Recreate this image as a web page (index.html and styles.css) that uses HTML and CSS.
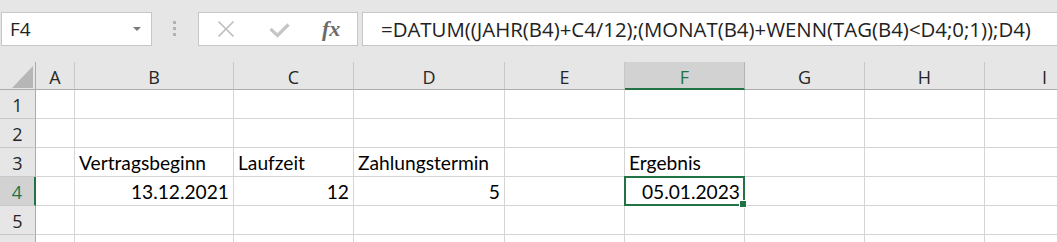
FILE: index.html
```html
<!DOCTYPE html>
<html>
  <head>
    <title>Mappe1 - Excel</title>
    <meta charset="UTF-8">
    <link rel="stylesheet" href="styles.css">
  </head>
  <body>
    <div class="formula-bar">
      <div class="name-box">
        <span class="ref">F4</span>
        <span class="caret"></span>
      </div>
      <div class="grip"><i></i><i></i><i></i></div>
      <div class="fx-box">
        <svg class="icon-cancel" width="18" height="18" viewBox="0 0 18 18">
          <path d="M1.5 1.5 L16.5 16.5 M16.5 1.5 L1.5 16.5" stroke="#bdbdbd" stroke-width="1.6" fill="none"/>
        </svg>
        <svg class="icon-enter" width="21" height="15" viewBox="0 0 21 15">
          <path d="M1.5 6 L8.5 12.5 L19.5 1.5" stroke="#c6c6c6" stroke-width="3.2" fill="none"/>
        </svg>
        <span class="fx">fx</span>
      </div>
      <div class="formula">=DATUM((JAHR(B4)+C4/12);(MONAT(B4)+WENN(TAG(B4)&lt;D4;0;1));D4)</div>
    </div>

    <div class="sheet">
      <!-- column headers -->
      <div class="corner"><span class="select-all"></span></div>
      <div class="col-head">A</div>
      <div class="col-head">B</div>
      <div class="col-head">C</div>
      <div class="col-head">D</div>
      <div class="col-head">E</div>
      <div class="col-head active">F</div>
      <div class="col-head">G</div>
      <div class="col-head">H</div>
      <div class="col-head">I</div>

      <!-- row 1 -->
      <div class="row-head">1</div>
      <div class="cell"></div><div class="cell"></div><div class="cell"></div><div class="cell"></div>
      <div class="cell"></div><div class="cell"></div><div class="cell"></div><div class="cell"></div><div class="cell"></div>

      <!-- row 2 -->
      <div class="row-head">2</div>
      <div class="cell"></div><div class="cell"></div><div class="cell"></div><div class="cell"></div>
      <div class="cell"></div><div class="cell"></div><div class="cell"></div><div class="cell"></div><div class="cell"></div>

      <!-- row 3 -->
      <div class="row-head">3</div>
      <div class="cell"></div>
      <div class="cell">Vertragsbeginn</div>
      <div class="cell">Laufzeit</div>
      <div class="cell">Zahlungstermin</div>
      <div class="cell"></div>
      <div class="cell">Ergebnis</div>
      <div class="cell"></div><div class="cell"></div><div class="cell"></div>

      <!-- row 4 -->
      <div class="row-head active">4</div>
      <div class="cell"></div>
      <div class="cell num">13.12.2021</div>
      <div class="cell num">12</div>
      <div class="cell num">5</div>
      <div class="cell"></div>
      <div class="cell num selected">05.01.2023</div>
      <div class="cell"></div><div class="cell"></div><div class="cell"></div>

      <!-- row 5 -->
      <div class="row-head">5</div>
      <div class="cell"></div><div class="cell"></div><div class="cell"></div><div class="cell"></div>
      <div class="cell"></div><div class="cell"></div><div class="cell"></div><div class="cell"></div><div class="cell"></div>

      <!-- row 6, only its top edge is in view -->
      <div class="row-head"></div>
      <div class="cell"></div><div class="cell"></div><div class="cell"></div><div class="cell"></div>
      <div class="cell"></div><div class="cell"></div><div class="cell"></div><div class="cell"></div><div class="cell"></div>
    </div>
  </body>
</html>
```

FILE: styles.css
```css
html, body {
  margin: 0;
  padding: 0;
  height: 242px;
  overflow: hidden;
  background-color: #e6e6e6;
  font-family: "Open Sans", "Noto Sans", sans-serif;
}

/* formula bar */

.formula-bar {
  display: flex;
  align-items: flex-start;
  height: 62px;
  padding: 12px 0 0 1px;
  box-sizing: border-box;
}

.name-box {
  display: flex;
  align-items: center;
  width: 151px;
  height: 34px;
  box-sizing: border-box;
  padding-left: 8px;
  border: 1px solid #c6c6c6;
  background-color: #fff;
}

.name-box .ref {
  flex: 1;
  font-size: 19px;
  color: #222;
}

.name-box .caret {
  width: 0;
  height: 0;
  margin-right: 10px;
  border-left: 4px solid transparent;
  border-right: 4px solid transparent;
  border-top: 4px solid #7a7a7a;
}

.grip {
  display: flex;
  flex-direction: column;
  gap: 3px;
  width: 46px;
  box-sizing: border-box;
  padding: 9px 0 0 21px;
}

.grip i {
  display: block;
  width: 3px;
  height: 3px;
  background-color: #b3b3b3;
}

.fx-box {
  display: flex;
  align-items: center;
  width: 160px;
  height: 34px;
  box-sizing: border-box;
  border: 1px solid #c6c6c6;
  background-color: #fff;
}

.icon-cancel {
  margin-left: 18px;
}

.icon-enter {
  margin-left: 34px;
  margin-top: 2px;
}

.fx {
  margin-left: 32px;
  font-family: "Liberation Serif", serif;
  font-style: italic;
  font-weight: bold;
  font-size: 22px;
  color: #6a6a6a;
}

.formula {
  flex: 1;
  height: 34px;
  margin-left: 4px;
  padding-left: 18px;
  box-sizing: border-box;
  border: 1px solid #c6c6c6;
  border-right: none;
  background-color: #fff;
  font-size: 20.4px;
  line-height: 32px;
  color: #222;
  white-space: nowrap;
}

/* sheet grid */

.sheet {
  display: grid;
  grid-template-columns: 36px 39px 159px 120px 151px 120px 120px 120px 120px 120px;
  grid-template-rows: 28px repeat(6, 29px);
  background-color: #fff;
}

.sheet > div {
  box-sizing: border-box;
  white-space: nowrap;
}

.corner {
  position: relative;
  background-color: #e6e6e6;
  border-right: 1px solid #ababab;
  border-bottom: 1px solid #ababab;
}

.select-all {
  position: absolute;
  right: 2px;
  bottom: 1px;
  width: 0;
  height: 0;
  border-left: 21px solid transparent;
  border-bottom: 22px solid #b6b6b6;
}

.col-head {
  padding-top: 3px;
  text-align: center;
  font-size: 18px;
  line-height: 24px;
  color: #262626;
  background-color: #e6e6e6;
  border-right: 1px solid #c8c8c8;
  border-bottom: 1px solid #ababab;
}

.col-head.active {
  color: #217346;
  background-color: #d2d2d2;
  border-right-color: #b4b4b4;
  border-bottom: 2px solid #217346;
}

.row-head {
  padding-top: 3px;
  text-align: center;
  font-size: 18px;
  line-height: 24px;
  color: #262626;
  background-color: #e6e6e6;
  border-right: 1px solid #ababab;
  border-bottom: 1px solid #c8c8c8;
}

.row-head.active {
  color: #217346;
  background-color: #d2d2d2;
  border-right: 2px solid #217346;
}

.cell {
  padding: 3px 4px 0;
  font-family: "Lato", "Liberation Sans", sans-serif;
  font-size: 19.2px;
  line-height: 24px;
  color: #000;
  border-right: 1px solid #d4d4d4;
  border-bottom: 1px solid #d4d4d4;
}

.cell.num {
  text-align: right;
}

.cell.selected {
  position: relative;
  z-index: 1;
}

.cell.selected::before {
  content: "";
  position: absolute;
  top: -1px;
  left: -1px;
  right: -1px;
  bottom: -1px;
  border: 2px solid #217346;
}

.cell.selected::after {
  content: "";
  position: absolute;
  right: -3px;
  bottom: -3px;
  width: 6px;
  height: 6px;
  background-color: #217346;
  border: 1px solid #fff;
}
```
